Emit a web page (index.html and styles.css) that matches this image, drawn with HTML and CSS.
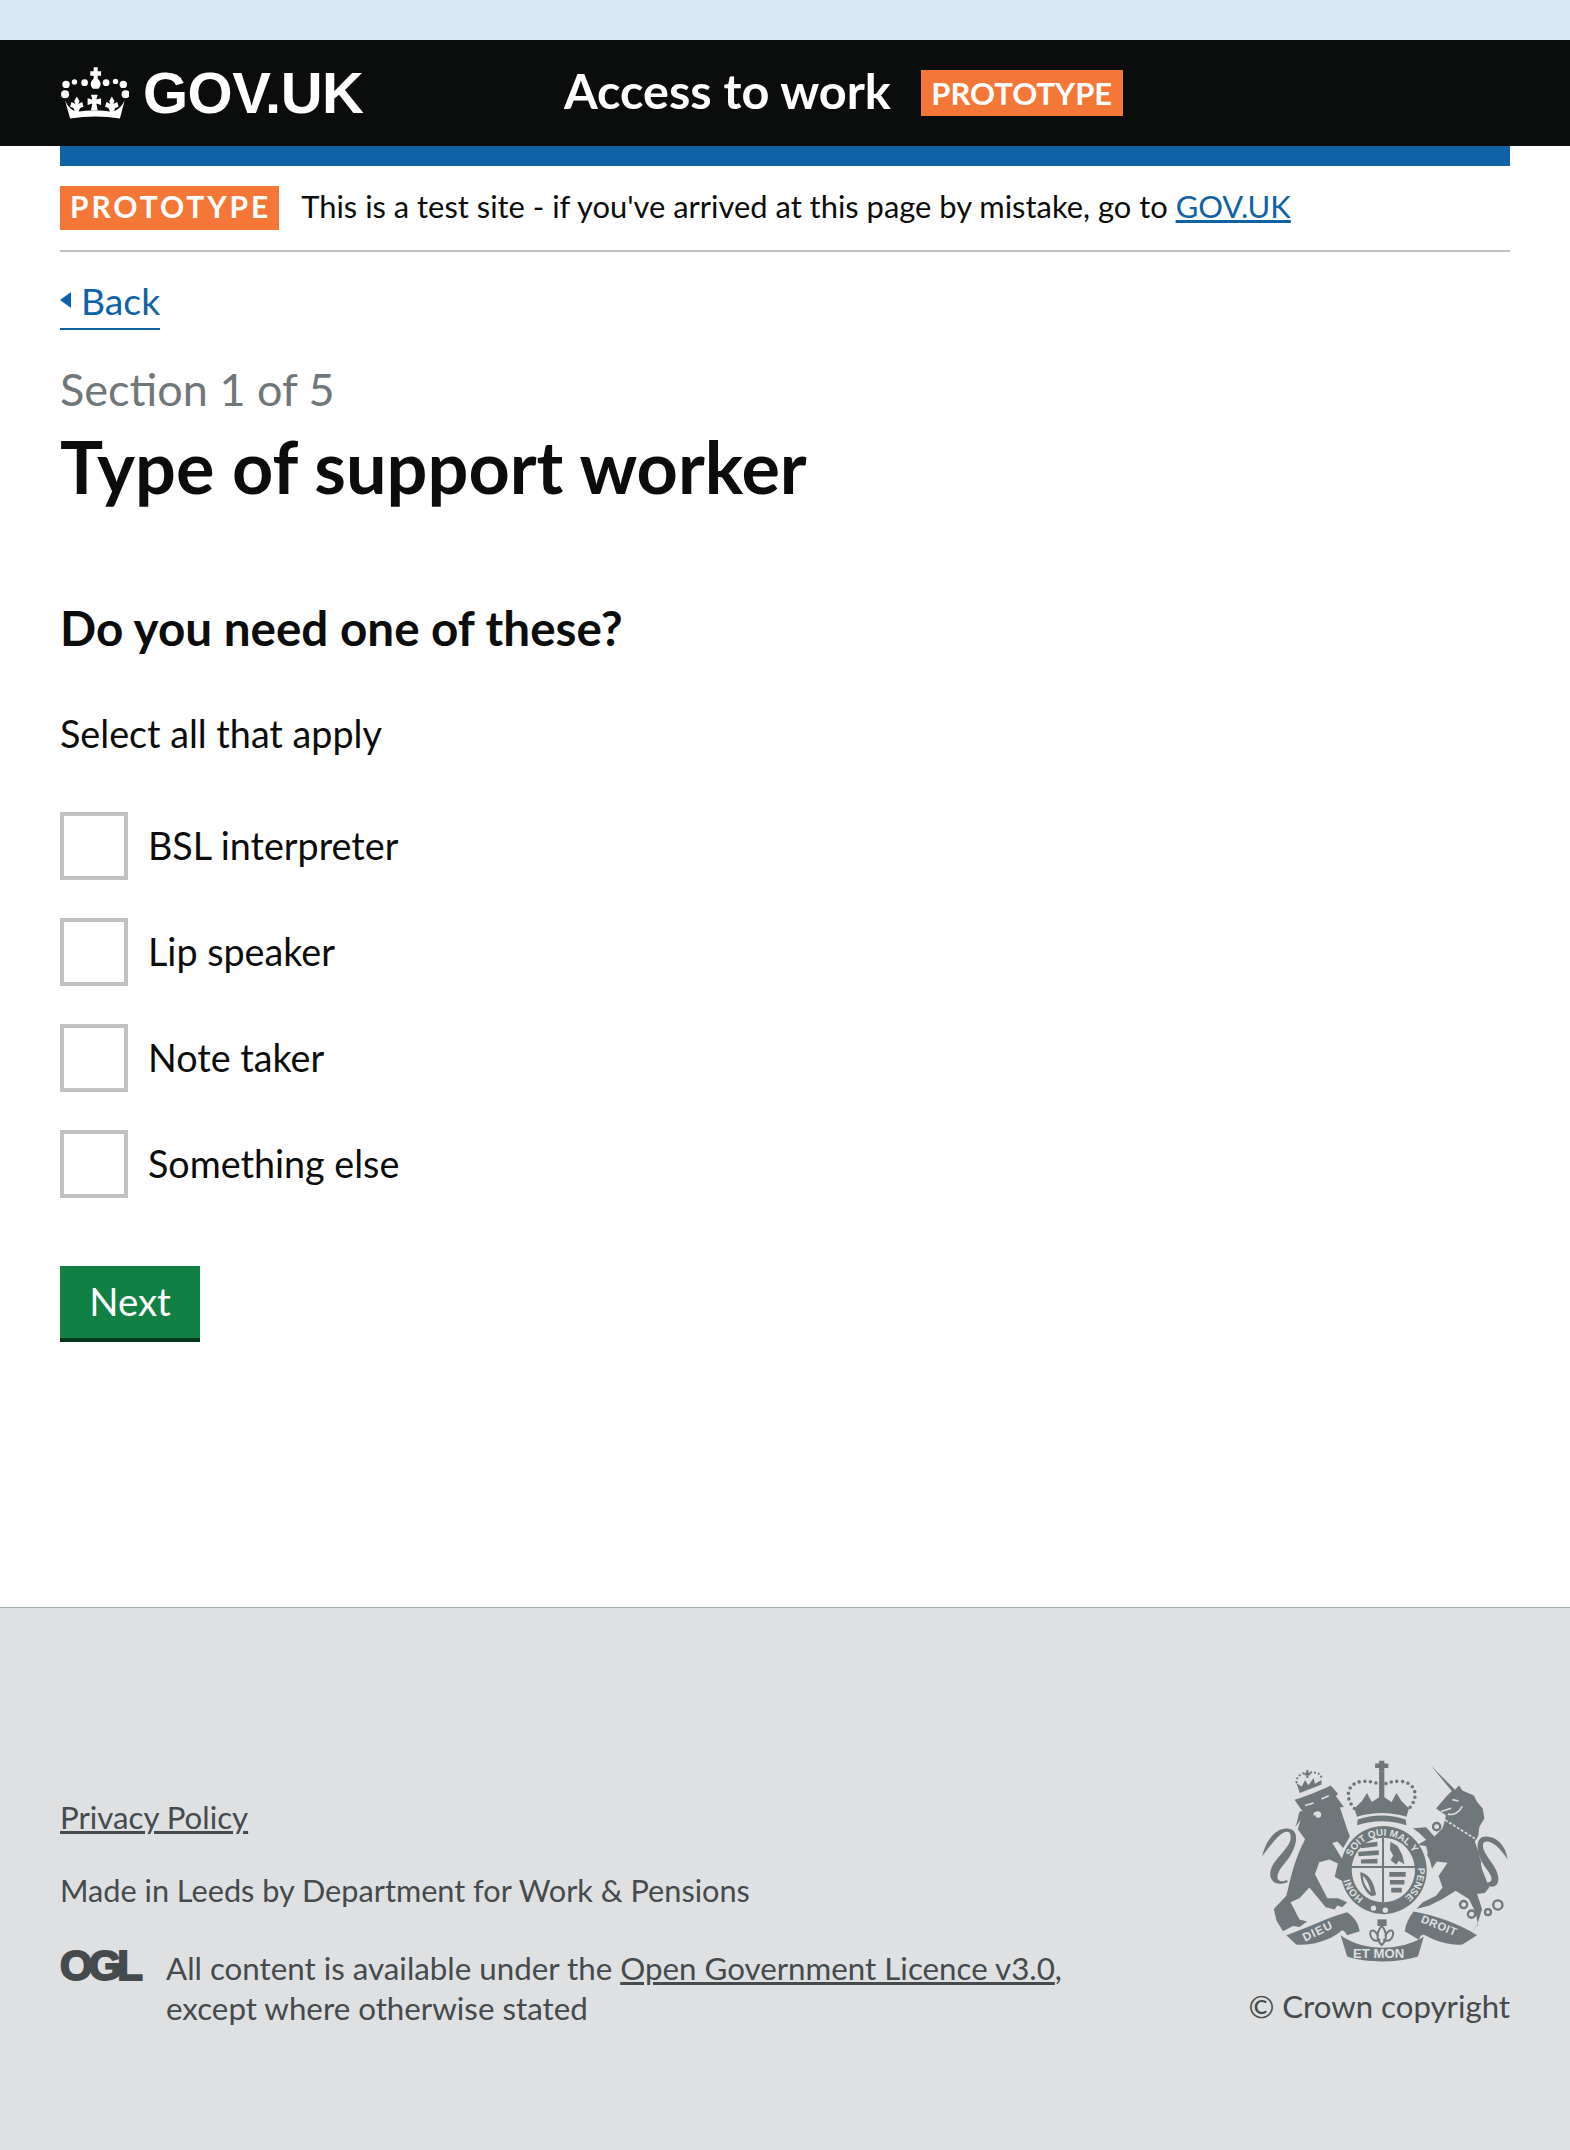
FILE: index.html
```html
<!DOCTYPE html>
<html lang="en">
<head>
  <meta charset="UTF-8">
  <meta name="viewport" content="width=device-width,initial-scale=1.0">
  <title>Type of support worker - Access to work</title>
  <link rel="stylesheet" href="styles.css">
</head>
<body>
  <div class="top-strip"></div>

  <!-- header -->
  <header class="site-header">
    <a class="logo" href="#">
      <svg class="crown" viewBox="60 40 205 165" aria-hidden="true">
        <g fill="#fff">
          <path d="M150 58h10v-12h12v12h10v13h-10v9c10 8 12 20 2 30h-16c-10-10-8-22 2-30v-9h-10z"/>
          <circle cx="133" cy="92" r="10"/><circle cx="197" cy="92" r="10"/>
          <circle cx="103" cy="90" r="8"/><circle cx="225" cy="88" r="8"/>
          <circle cx="78" cy="97" r="11"/><circle cx="248" cy="97" r="11"/>
          <circle cx="75" cy="126" r="12"/><circle cx="255" cy="126" r="12"/>
          <path d="M90 198C140 190 190 190 238 198L252 145C243 165 228 175 215 178C180 172 145 172 110 178C97 175 84 165 75 145Z"/>
          <path d="M110 133l8 14-4 8 12-6 4 14-10 4-5 12h-10l-5-12-10-4 4-14 12 6-4-8z"/>
          <path d="M214 133l8 14-4 8 12-6 4 14-10 4-5 12h-10l-5-12-10-4 4-14 12 6-4-8z"/>
          <path d="M152 128h20l-4 14 14-4v20l-14-4 4 20h-20l4-20-14 4v-20l14 4z"/>
        </g>
      </svg>
      <span class="logo-text">GOV.UK</span>
    </a>
    <span class="service-name">Access to work</span>
    <span class="phase-tag">PROTOTYPE</span>
  </header>

  <div class="container">
    <div class="blue-bar"></div>

    <div class="phase-banner">
      <strong class="banner-tag">PROTOTYPE</strong>
      <span class="banner-text">This is a test site - if you've arrived at this page by mistake, go to <a href="#">GOV.UK</a></span>
    </div>

    <a class="back-link" href="#">Back</a>

    <p class="caption">Section 1 of 5</p>
    <h1>Type of support worker</h1>

    <form>
      <h2>Do you need one of these?</h2>
      <p class="hint">Select all that apply</p>

      <div class="checkboxes">
        <label class="checkbox"><input type="checkbox"><span>BSL interpreter</span></label>
        <label class="checkbox"><input type="checkbox"><span>Lip speaker</span></label>
        <label class="checkbox"><input type="checkbox"><span>Note taker</span></label>
        <label class="checkbox"><input type="checkbox"><span>Something else</span></label>
      </div>

      <button class="button" type="button">Next</button>
    </form>
  </div>

  <!-- footer -->
  <footer class="site-footer">
    <div class="footer-meta">
      <a class="footer-link" href="#">Privacy Policy</a>
      <p class="made-in">Made in Leeds by Department for Work &amp; Pensions</p>
      <div class="licence">
        <span class="ogl">OGL</span>
        <p>All content is available under the <a href="#">Open Government Licence v3.0</a>,<br>except where otherwise stated</p>
      </div>
    </div>
    <div class="copyright">
      <svg class="crest" viewBox="85 55 760 625" aria-hidden="true">
        <defs>
          <path id="garter" d="M363 352A105 105 0 0 1 563 374"/>
          <path id="garter-right" d="M565 385A105 105 0 0 1 504 487"/>
          <path id="garter-low" d="M400 478A105 105 0 0 1 355 383"/>
        </defs>
        <g fill="#6f777b">
          <!-- lion -->
          <path d="M190 178C215 172 270 150 300 135L322 160L316 168L340 200L328 202L348 262L358 290L338 325L320 305L305 310L345 375L365 420L340 428L312 412L322 372L296 360L265 368L252 405L290 478L322 478L350 490L335 505L320 500L312 512L285 505L235 445L205 478L178 490L205 542L228 548L205 565L185 562L155 578L135 545L127 510L165 470C178 420 185 370 222 298L200 268L208 240L192 262C205 230 200 205 215 215Z"/>
          <path d="M170 428c-46 20-66-14-46-52 18-32 66-64 52-96-16-18-48 20-84 70 10-48 42-88 78-84 36 4 28 48 6 84-14 22-38 42-38 64 0 12 14 16 28 8z"/>
          <!-- lion's crown -->
          <path d="M206 158L196 128L212 138L222 118L232 134L248 112L252 130L272 118L272 132Z"/>
          <path d="M214 104h6v-8h6v-8h6v8h6v8h-6v8h-6v-8h-6z"/>
          <!-- crown -->
          <path d="M447 82h-12V68h12V60h16v8h12v14h-12v10h-16z"/>
          <rect x="447" y="92" width="16" height="80"/>
          <path d="M372 205L395 182L410 158L425 185L455 165L485 185L500 158L515 182L538 205L530 230C480 215 430 215 380 230Z"/>
          <path d="M382 238C430 222 480 222 528 238L530 256C480 240 430 240 380 256Z"/>
          <!-- unicorn -->
          <path d="M605 75L678 148L690 135L700 150L735 165L745 185L762 205L767 235L752 260L748 290L738 305L750 340L760 390L782 445L768 462L745 465L760 510L745 560L725 582L748 558L740 520L720 480L680 455L640 480L600 500L560 510L580 490L620 470L640 445L628 410L655 370L622 366L608 388L590 320L565 315L590 300L570 280L550 265L590 262L615 290L640 265L648 238L650 225L620 205L650 170L668 152Z"/>
          <path d="M762 430c30 26 58 10 44-30-12-34-50-62-42-90 14-14 44 4 74 50-6-44-34-70-66-70-32 0-30 40-14 74 12 26 36 44 30 60-4 8-16 6-26 6z"/>
          <!-- shield ring -->
          <path fill-rule="evenodd" d="M460 258c74 0 132 60 132 134 0 72-56 132-130 134-74 0-132-60-132-134 0-74 58-134 130-134zm0 36c-54 0-96 44-96 98s42 98 96 98 96-44 96-98-42-98-96-98z"/>
          <!-- quarters: lions, lion rampant, harp, lions -->
          <path d="M362 380h196v6H362zM456 294h6v196h-6z"/>
          <path d="M392 312l50-6v14l-50 6zM384 336l62-4v14l-62 4zM392 360l50-2v14h-50z"/>
          <path d="M482 306l22 14 14 28 6 26-18-10-6 12-18-14 8-14-10-18z"/>
          <path d="M478 398h50v14h-50zM480 422h44v14h-44zM484 446h32v14h-32z"/>
          <path fill-rule="evenodd" d="M390 398c20 6 40 20 48 70l-14 4c-20-14-34-40-34-74zm8 12c0 18 10 38 24 50-4-22-12-40-24-50z"/>
          <!-- ribbon -->
          <path d="M165 590C225 570 290 535 350 520C372 535 385 555 388 578L350 590C342 575 334 572 328 580C290 610 235 622 195 618Z"/>
          <path d="M745 590C690 555 620 530 552 518C538 535 528 555 525 578L568 604C572 590 580 585 590 592C625 612 670 622 700 618Z"/>
          <path d="M330 590C400 640 510 640 583 595L565 655C500 675 410 675 350 655Z"/>
          <!-- fleur-de-lis stem -->
          <rect x="442" y="542" width="28" height="20"/>
        </g>
        <g fill="none" stroke="#6f777b">
          <path stroke-width="11" stroke-linecap="round" stroke-dasharray="0 17" d="M372 205C340 170 350 125 400 122C430 122 445 130 455 135C465 130 480 122 510 122C560 125 570 170 538 205"/>
          <path stroke-width="7" stroke-linecap="round" stroke-dasharray="0 12" d="M196 125C195 100 225 95 232 95C250 95 272 95 272 115"/>
          <g stroke-width="7">
            <circle cx="622" cy="260" r="11"/><circle cx="608" cy="345" r="11"/>
            <circle cx="744" cy="368" r="10"/><circle cx="736" cy="414" r="8"/>
            <circle cx="704" cy="497" r="11"/><circle cx="728" cy="526" r="11"/>
            <circle cx="778" cy="520" r="9"/><circle cx="808" cy="498" r="14"/>
          </g>
          <!-- fleur-de-lis -->
          <g stroke-width="6">
            <path d="M455 562C472 582 472 604 455 620C438 604 438 582 455 562Z"/>
            <path d="M444 592C430 565 412 575 424 598C430 608 444 610 450 602"/>
            <path d="M466 592C480 565 498 575 486 598C480 608 466 610 460 602"/>
          </g>
        </g>
        <!-- face, collar and strap picked out in the footer colour -->
        <g fill="none" stroke="#dee0e2">
          <path stroke-width="5" d="M222 196l26-8M272 176l22-10M250 226c-2-10 14-14 18-4"/>
          <path stroke-width="5" d="M636 214l30-10M670 178l18 4M656 222c16 4 34-4 44-24"/>
          <path stroke-width="5" stroke-dasharray="9 5" d="M648 240L738 296"/>
        </g>
        <g fill="#dee0e2">
          <circle cx="430" cy="508" r="8"/><circle cx="466" cy="514" r="8"/>
          <circle cx="262" cy="224" r="9"/>
        </g>
        <g fill="#dee0e2" font-family="'Liberation Sans',sans-serif" font-weight="700" font-size="30">
          <text><textPath href="#garter">SOIT QUI MAL Y</textPath></text>
          <text><textPath href="#garter-right">PENSE</textPath></text>
          <text><textPath href="#garter-low">HONI</textPath></text>
          <text x="222" y="610" font-size="36" transform="rotate(-26 222 610)" letter-spacing="3">DIEU</text>
          <text x="368" y="660" font-size="40">ET MON</text>
          <text x="572" y="550" font-size="34" transform="rotate(22 572 550)" letter-spacing="2">DROIT</text>
        </g>
      </svg>
      <span class="crown-copy">© Crown copyright</span>
    </div>
  </footer>
</body>
</html>
```

FILE: styles.css
```css
body {
  font-family: 'Lato', 'Noto Sans', sans-serif;
  margin: 0;
  padding: 0;
  background: #fff;
  color: #0b0c0c;
}
a {
  color: #0f62a6;
}

.top-strip {
  height: 40px;
  background: #d5e8f3;
}
.site-header {
  height: 106px;
  background: #0b0c0c;
  padding: 0 60px;
  display: flex;
  align-items: center;
}
.logo {
  display: flex;
  align-items: center;
  gap: 14px;
  color: #fff;
  text-decoration: none;
  width: 504px;
}
.crown {
  width: 69px;
  height: 56px;
}
.logo-text {
  font-family: 'Liberation Sans', Arial, sans-serif;
  font-weight: 700;
  font-size: 58px;
  line-height: 1;
  letter-spacing: -0.5px;
}
.service-name {
  font-size: 48.6px;
  font-weight: 700;
  color: #fff;
  margin-right: 30px;
  padding-bottom: 7px;
}
.phase-tag {
  background: #f47738;
  color: #fff;
  font-size: 31px;
  font-weight: 700;
  line-height: 46px;
  padding: 0 10.5px;
}

.container {
  margin: 0 60px;
  height: 1461px;
}
.blue-bar {
  height: 20px;
  background: #0f62a6;
}
.phase-banner {
  display: flex;
  align-items: center;
  gap: 22px;
  padding: 20px 0;
  border-bottom: 2px solid #bfc1c3;
  font-size: 30.9px;
}
.banner-text {
  padding-bottom: 3px;
}
.banner-tag {
  background: #f47738;
  color: #fff;
  font-size: 30px;
  line-height: 41px;
  padding: 0 8px 3px 10px;
  letter-spacing: 2.9px;
}
.back-link {
  display: inline-block;
  margin-top: 27px;
  font-size: 37.3px;
  line-height: 44px;
  text-decoration: none;
  border-bottom: 2px solid #0f62a6;
  padding: 0 0 5px 21px;
  position: relative;
}
.back-link::before {
  content: "";
  position: absolute;
  left: 0;
  top: 13px;
  border-top: 8px solid transparent;
  border-bottom: 8px solid transparent;
  border-right: 11px solid #0f62a6;
}
.caption {
  margin: 29px 0 0;
  font-size: 45px;
  line-height: 60px;
  color: #6f777b;
}
h1 {
  margin: 2px 0 0;
  font-size: 72px;
  line-height: 90px;
  font-weight: 700;
}
h2 {
  margin: 87px 0 0;
  font-size: 47.6px;
  line-height: 60px;
  font-weight: 700;
}
.hint {
  margin: 52px 0 0;
  font-size: 37.7px;
  line-height: 48px;
}
.checkboxes {
  margin-top: 54px;
  display: flex;
  flex-direction: column;
  gap: 38px;
}
.checkbox {
  display: flex;
  align-items: center;
  gap: 20px;
  font-size: 37.7px;
  line-height: 68px;
}
.checkbox input {
  appearance: none;
  width: 68px;
  height: 68px;
  margin: 0;
  border: 4px solid #bfc1c3;
  background: #fff;
}
.button {
  margin-top: 68px;
  display: block;
  width: 140px;
  height: 76px;
  border: 0;
  background: #118043;
  box-shadow: inset 0 -4px 0 #003618;
  color: #fff;
  font-family: inherit;
  font-size: 38.4px;
  padding: 0 0 6px;
}

.site-footer {
  border-top: 1px solid #a1acb2;
  background: #dee0e2;
  height: 543px;
  box-sizing: border-box;
  padding: 151px 60px 0;
  display: flex;
  justify-content: space-between;
  align-items: flex-start;
  color: #454a4c;
  font-size: 30.7px;
}
.footer-link {
  color: #454a4c;
  display: block;
  line-height: 40px;
  margin-top: 38px;
  font-size: 31.2px;
}
.made-in {
  margin: 34px 0 0;
  line-height: 40px;
}
.licence {
  display: flex;
  gap: 25px;
  margin-top: 37px;
}
.licence p {
  margin: 0;
  line-height: 40px;
  font-size: 31.3px;
}
.licence a {
  color: #454a4c;
}
.ogl {
  font-family: 'Liberation Sans', Arial, sans-serif;
  font-weight: 700;
  font-size: 42px;
  line-height: 36px;
  letter-spacing: -4px;
  width: 81px;
  -webkit-text-stroke: 2px #454a4c;
}
.copyright {
  display: flex;
  flex-direction: column;
  align-items: flex-end;
}
.crest {
  width: 250px;
  height: 206px;
}
.crown-copy {
  margin-top: 21px;
  line-height: 40px;
  font-size: 31.2px;
}
```
